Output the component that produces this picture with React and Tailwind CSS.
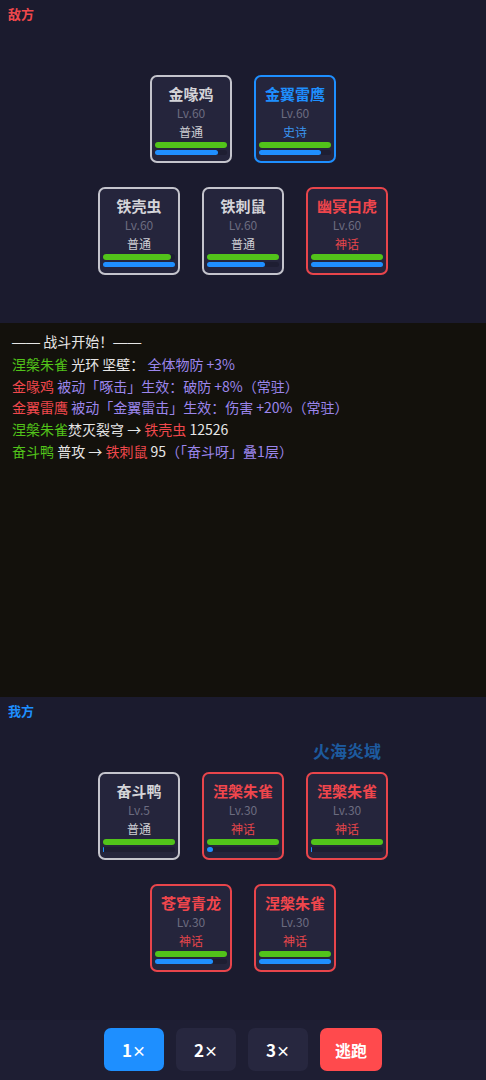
import React from "react";

const FONT = { fontFamily: '"Noto Sans CJK SC", "Noto Sans", sans-serif' };

const RARITY = {
  n: { border: "border-[#c4c4cc]", name: "text-[#d4d4d8]", tag: "text-[#cfcfd4]", label: "普通" },
  e: { border: "border-[#1e8fff]", name: "text-[#1e8fff]", tag: "text-[#3a96f0]", label: "史诗" },
  m: { border: "border-[#e8454b]", name: "text-[#f0464c]", tag: "text-[#e8454b]", label: "神话" },
};

function Card({ name, lv, r, hp = 100, mp = 100, aura }) {
  const s = RARITY[r];
  return (
    <div className="relative">
      {aura && (
        <div className="absolute left-1/2 -translate-x-1/2 bottom-[100%] mb-[10px] whitespace-nowrap text-[17px] leading-[22px] font-bold text-[#1d5a9e]">
          {aura}
        </div>
      )}
      <div className={`w-[82px] h-[88px] rounded-[7px] border-2 ${s.border} bg-[#25253c] px-[3px] pt-[6px] pb-[6px] flex flex-col items-center`}>
        <div className={`text-[15px] leading-[21px] font-bold ${s.name}`}>{name}</div>
        <div className="text-[12px] leading-[18px] text-[#6c6c80]">Lv.{lv}</div>
        <div className={`text-[12px] leading-[17px] pt-[1px] ${s.tag}`}>{s.label}</div>
        <div className="mt-[2px] w-full h-[6px] rounded-full bg-[#1e1e32]">
          <div className="h-full rounded-full bg-[#52c41a]" style={{ width: `${hp}%` }} />
        </div>
        <div className="mt-[2px] w-full h-[5px] rounded-full bg-[#1e1e32]">
          <div className="h-full rounded-full bg-[#1f8fff]" style={{ width: `${mp}%`, minWidth: mp > 0 ? "1px" : 0 }} />
        </div>
      </div>
    </div>
  );
}

function Side({ title, titleColor, rows }) {
  return (
    <div className="h-[323px] bg-[#1b1b2e] flex flex-col">
      <div className={`pl-[8px] pt-[6px] text-[13px] leading-[16px] font-bold ${titleColor}`}>{title}</div>
      <div className="pt-[53px] flex flex-col items-center gap-[24px]">
        {rows.map((row, i) => (
          <div key={i} className="flex gap-[22px]">
            {row.map((c, j) => (
              <Card key={j} {...c} />
            ))}
          </div>
        ))}
      </div>
    </div>
  );
}

const G = "text-[#52c41a]";
const W = "text-[#e6e6e6]";
const P = "text-[#9c86ec]";
const R = "text-[#f0484c]";

function Log() {
  const lines = [
    [[G, "涅槃朱雀"], [W, " 光环 坚壁："], [P, " 全体物防 +3%"]],
    [[R, "金喙鸡"], [P, " 被动「啄击」生效：破防 +8%（常驻）"]],
    [[R, "金翼雷鹰"], [P, " 被动「金翼雷击」生效：伤害 +20%（常驻）"]],
    [[G, "涅槃朱雀"], [W, "焚灭裂穹 → "], [R, "铁壳虫"], [W, " 12526"]],
    [[G, "奋斗鸭"], [W, " 普攻 → "], [R, "铁刺鼠"], [W, " 95"], [P, "（「奋斗呀」叠1层）"]],
  ];
  const dash = { fontFamily: '"Liberation Sans", sans-serif' };
  return (
    <div className="h-[374px] bg-[#13110c] px-[12px] pt-[8px] text-[14px] leading-[21.8px]">
      <div className={`whitespace-pre ${W}`}>
        <span style={dash}>——</span> 战斗开始！<span style={dash}>——</span>
      </div>
      {lines.map((l, i) => (
        <div key={i} className="whitespace-pre">
          {l.map(([c, t], j) => (
            <span key={j} className={c}>{t}</span>
          ))}
        </div>
      ))}
    </div>
  );
}

function SpeedBtn({ n, active }) {
  return (
    <button className={`w-[60px] h-[43px] rounded-[7px] ${active ? "bg-[#1e8fff]" : "bg-[#27273f]"} text-white font-bold flex items-center justify-center`}>
      <span className="text-[17px] leading-none">{n}</span>
      <span className="text-[14px] leading-none">×</span>
    </button>
  );
}

export default function App() {
  return (
    <div className="w-[486px] h-[1080px] bg-[#1b1b2e] flex flex-col overflow-hidden" style={FONT}>
      <Side
        title="敌方"
        titleColor="text-[#f0484c]"
        rows={[
          [
            { name: "金喙鸡", lv: 60, r: "n", mp: 88 },
            { name: "金翼雷鹰", lv: 60, r: "e", mp: 86 },
          ],
          [
            { name: "铁壳虫", lv: 60, r: "n", hp: 94 },
            { name: "铁刺鼠", lv: 60, r: "n", mp: 80 },
            { name: "幽冥白虎", lv: 60, r: "m" },
          ],
        ]}
      />
      <Log />
      <Side
        title="我方"
        titleColor="text-[#1e8fff]"
        rows={[
          [
            { name: "奋斗鸭", lv: 5, r: "n", mp: 0.5 },
            { name: "涅槃朱雀", lv: 30, r: "m", mp: 9 },
            { name: "涅槃朱雀", lv: 30, r: "m", mp: 0.5, aura: "火海炎域" },
          ],
          [
            { name: "苍穹青龙", lv: 30, r: "m", mp: 80 },
            { name: "涅槃朱雀", lv: 30, r: "m" },
          ],
        ]}
      />
      <div className="h-[60px] bg-[#1e1e33] flex items-start justify-center gap-[12px] pt-[8px]">
        <SpeedBtn n="1" active />
        <SpeedBtn n="2" />
        <SpeedBtn n="3" />
        <button className="w-[62px] h-[43px] rounded-[7px] bg-[#ff4a4d] text-white text-[16px] font-bold">逃跑</button>
      </div>
    </div>
  );
}
